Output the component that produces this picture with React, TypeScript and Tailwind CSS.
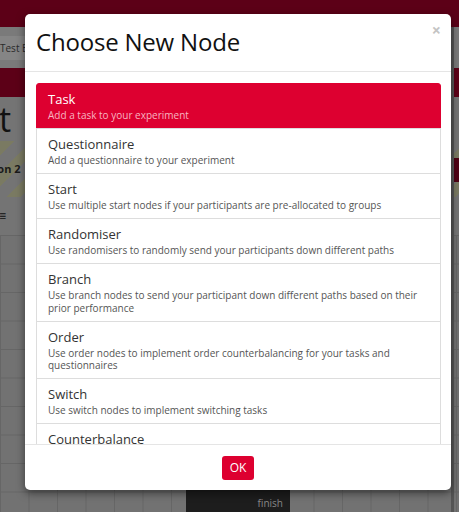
import React from "react";

const items = [
  { t: "Task", d: "Add a task to your experiment", active: true },
  { t: "Questionnaire", d: "Add a questionnaire to your experiment" },
  { t: "Start", d: "Use multiple start nodes if your participants are pre-allocated to groups" },
  { t: "Randomiser", d: "Use randomisers to randomly send your participants down different paths" },
  { t: "Branch", d: "Use branch nodes to send your participant down different paths based on their prior performance" },
  { t: "Order", d: "Use order nodes to implement order counterbalancing for your tasks and questionnaires" },
  { t: "Switch", d: "Use switch nodes to implement switching tasks" },
  { t: "Counterbalance", d: "Use counterbalance nodes to counterbalance across participants" },
];

export default function App() {
  return (
    <div
      className="relative w-[459px] h-[512px] overflow-hidden bg-[#747474]"
      style={{ fontFamily: '"Open Sans", "Noto Sans", sans-serif' }}
    >
      {/* background app (dimmed) */}
      <div className="flex flex-col h-full">
        <div className="h-[27px] bg-[#5c0017] shrink-0" />
        <div className="h-[41px] bg-[#7a7a7a] shrink-0 flex items-center">
          <div className="h-[24px] w-[30px] bg-[#858585] flex items-center text-[10px] text-[#2a2a2a] leading-none">Test E</div>
        </div>
        <div className="h-[29px] bg-[#5c0017] shrink-0" />
        <div className="h-[44px] shrink-0 flex items-center text-[34px] leading-none text-[#111] -ml-[1px]">t</div>
        <div className="h-[56px] shrink-0 bg-[repeating-linear-gradient(135deg,#7a7a62_0px,#7a7a62_10px,#747474_10px,#747474_22px)] flex items-center">
          <span className="text-[11px] font-bold text-[#1a1a1a] -ml-[6px]">ion 2</span>
        </div>
        <div className="h-[38px] shrink-0 flex items-center text-[12px] text-[#111] font-bold -ml-[1px]">≡</div>
        <div className="flex-1 relative bg-[#727272] bg-[linear-gradient(to_right,#666_1px,transparent_1px),linear-gradient(to_bottom,#666_1px,transparent_1px)] bg-[size:28.5px_28.5px]">
          <div className="absolute left-[186px] top-[255px] w-[104px] h-[40px] bg-[#1d1d1d] flex flex-col items-end px-[7px] pt-[8px]">
            <span className="text-[10px] leading-none text-[#888]">finish</span>
          </div>
        </div>
      </div>
      {/* right side strip */}
      <div className="absolute left-[451px] top-[158px] w-[8px] h-[24px] bg-[#4e0014]" />
      <div className="absolute left-[451px] top-[27px] w-[3px] h-[485px] bg-[#555]" />

      {/* modal */}
      <div className="absolute left-[25px] top-[14px] w-[426px] h-[476px] bg-white rounded-[5px] shadow-[0_3px_9px_rgba(0,0,0,0.5)] flex flex-col overflow-hidden">
        <div className="h-[58px] shrink-0 border-b border-[#e5e5e5] flex items-center px-[11px] relative">
          <h4 className="text-[24px] leading-none text-[#111] tracking-[-0.2px] pb-[2px]">Choose New Node</h4>
          <span className="absolute right-[10px] top-[8px] text-[16px] font-bold text-[#c4c4c4] leading-none">×</span>
        </div>
        <div className="flex-1 overflow-hidden pt-[11px] pl-[11px] pr-[10px]">
          <div className="flex flex-col">
            {items.map((it, i) => (
              <div
                key={i}
                className={
                  it.active
                    ? "bg-[#dd0030] border border-[#dd0030] rounded-t-[3px] px-[11px] pt-[7px] pb-[6.5px] -mb-px"
                    : "bg-white border border-[#dddddd] px-[11px] pt-[7px] pb-[6.5px] -mb-px"
                }
              >
                <div className={"text-[13px] leading-[16px] " + (it.active ? "text-white" : "text-[#333]")}>{it.t}</div>
                <div className={"text-[10px] leading-[12.5px] mt-[2px] " + (it.active ? "text-[#f7b4c0]" : "text-[#555]")}>{it.d}</div>
              </div>
            ))}
          </div>
        </div>
        <div className="h-[46px] shrink-0 border-t border-[#e5e5e5] flex items-center justify-center">
          <button className="w-[32px] h-[24px] rounded-[3px] bg-[#dd0030] text-white text-[12px] leading-none">OK</button>
        </div>
      </div>
    </div>
  );
}
